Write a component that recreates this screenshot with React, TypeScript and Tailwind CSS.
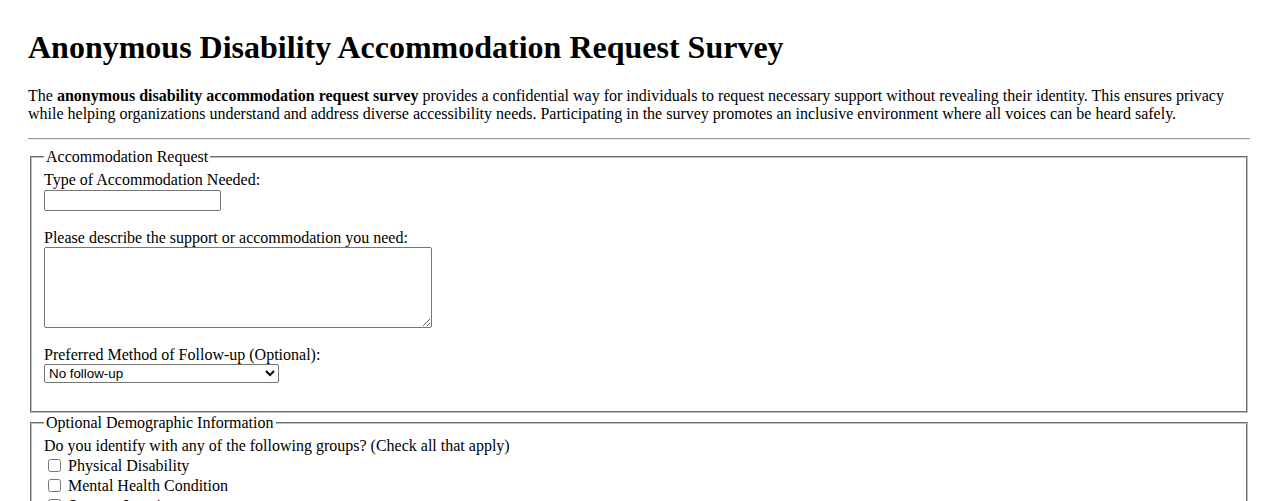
import React from "react";

const serif = "font-['Liberation_Serif','Times_New_Roman',serif]";

function Check({ label }: { label: string }) {
  return (
    <div className="flex h-[20px] items-center">
      <input type="checkbox" className="ml-[4px] mr-[3px] h-[13px] w-[13px]" />
      <span className="ml-[4px] leading-[18px]">{label}</span>
    </div>
  );
}

export default function App() {
  return (
    <div className={`${serif} min-h-screen bg-white px-[28px] text-[16px] text-black`}>
      <h1 className="pt-[29px] text-[32px] font-bold leading-[37px]">
        Anonymous Disability Accommodation Request Survey
      </h1>
      <p className="mt-[21px] leading-[18.4px]">
        The <strong>anonymous disability accommodation request survey</strong> provides a confidential way for
        individuals to request necessary support without revealing their identity. This ensures privacy while helping
        organizations understand and address diverse accessibility needs. Participating in the survey promotes an
        inclusive environment where all voices can be heard safely.
      </p>
      <hr className="mt-[14px] h-0 border-t border-b border-t-[#9a9a9a] border-b-[#eeeeee]" />

      <fieldset className="mx-[2px] mt-[8px] border-2 border-[#c0c0c0] px-[12px] pb-[28px] pt-[5px] [border-style:groove]">
        <legend className="px-[2px] leading-[18px]">Accommodation Request</legend>
        <div className="flex flex-col items-start">
          <label className="h-[18px] leading-[18px]">Type of Accommodation Needed:</label>
          <input
            type="text"
            className="mt-[1px] h-[21px] w-[177px] rounded-[2px] border border-[#767676] px-[2px] font-['Liberation_Sans',Arial,sans-serif] text-[13.33px]"
          />
          <label className="mt-[18px] h-[18px] leading-[18px]">Please describe the support or accommodation you need:</label>
          <textarea className="h-[81px] w-[388px] rounded-[2px] border border-[#767676] px-[2px] font-['Liberation_Mono',monospace] text-[13.33px]" />
          <label className="mt-[18px] h-[18px] leading-[18px]">Preferred Method of Follow-up (Optional):</label>
          <select className="h-[19px] w-[235px] rounded-[2px] border border-[#767676] bg-white font-['Liberation_Sans',Arial,sans-serif] text-[13.33px] leading-[17px]">
            <option>No follow-up</option>
            <option>Email</option>
            <option>Phone</option>
          </select>
        </div>
      </fieldset>

      <fieldset className="mx-[2px] mt-[1px] border-2 border-[#c0c0c0] px-[12px] pb-[10px] pt-[5px] [border-style:groove]">
        <legend className="px-[2px] leading-[18px]">Optional Demographic Information</legend>
        <div className="h-[19px] leading-[18px]">Do you identify with any of the following groups? (Check all that apply)</div>
        <Check label="Physical Disability" />
        <Check label="Mental Health Condition" />
        <Check label="Sensory Impairment" />
        <Check label="Learning Disability" />
        <Check label="Chronic Illness" />
      </fieldset>
    </div>
  );
}
